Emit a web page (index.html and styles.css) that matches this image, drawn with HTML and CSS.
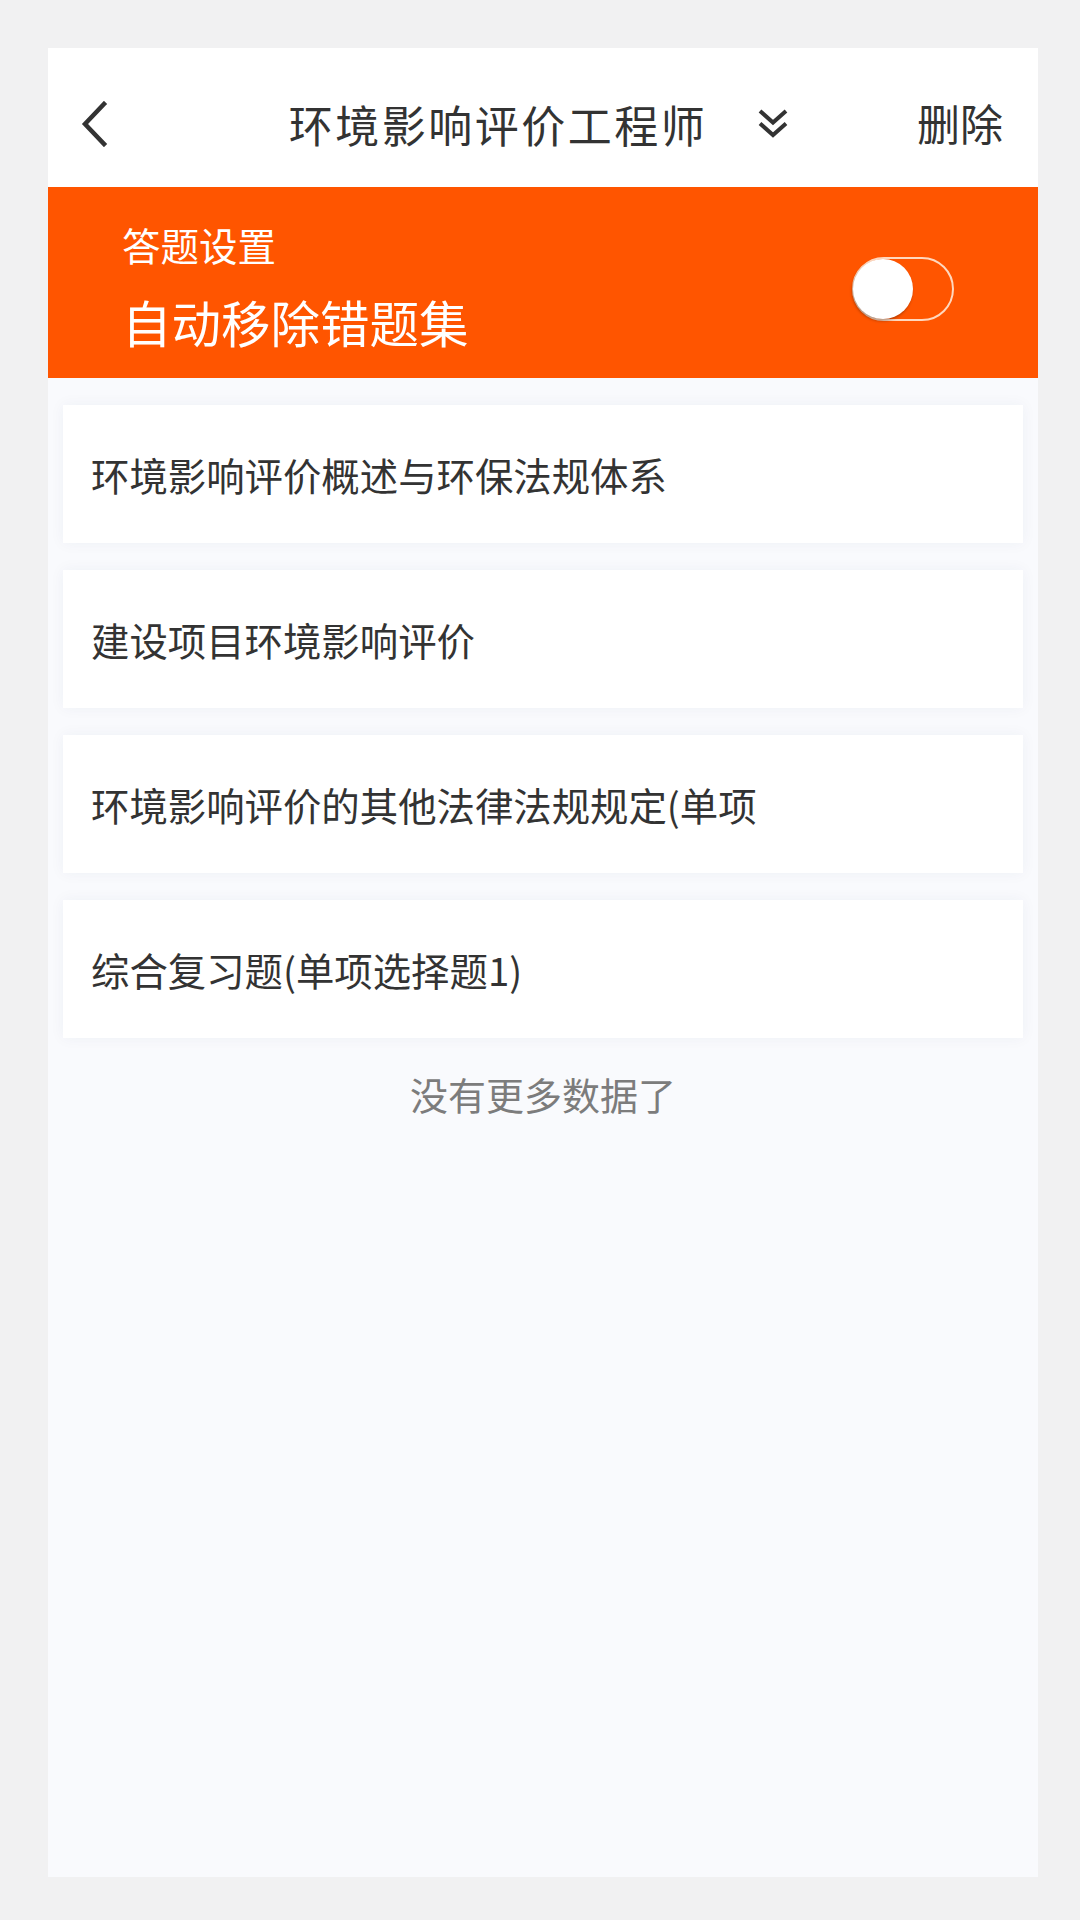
FILE: index.html
```html
<!DOCTYPE html>
<html lang="zh-CN">
<head>
<meta charset="utf-8">
<title>环境影响评价工程师</title>
<link rel="stylesheet" href="styles.css">
</head>
<body>
<div class="page">
  <header class="topbar">
    <div class="bar-left">
      <svg class="back" viewBox="0 0 28 46" width="28" height="46" aria-hidden="true">
        <path d="M24 3 L5 23 L24 43" fill="none" stroke="#333" stroke-width="4.5" stroke-linecap="square" stroke-linejoin="miter"/>
      </svg>
    </div>
    <div class="bar-center">
      <span class="title">环境影响评价工程师</span>
      <svg class="dbl" viewBox="0 0 32 32" width="32" height="32" aria-hidden="true">
        <path d="M3 3 L16 14.5 L29 3" fill="none" stroke="#333" stroke-width="4"/>
        <path d="M3 15.5 L16 27 L29 15.5" fill="none" stroke="#333" stroke-width="4"/>
      </svg>
    </div>
    <div class="bar-right"><span class="del">删除</span></div>
  </header>

  <section class="banner">
    <div class="banner-text">
      <div class="sub">答题设置</div>
      <div class="main">自动移除错题集</div>
    </div>
    <div class="toggle"><span class="knob"></span></div>
  </section>

  <main class="list">
    <div class="item">环境影响评价概述与环保法规体系</div>
    <div class="item">建设项目环境影响评价</div>
    <div class="item">环境影响评价的其他法律法规规定(单项</div>
    <div class="item">综合复习题(单项选择题1)</div>
    <div class="nomore">没有更多数据了</div>
  </main>
</div>
</body>
</html>
```

FILE: styles.css
```css
html, body {
  margin: 0;
  padding: 0;
}
body {
  background: #f1f1f2;
  padding: 48px 0 0 48px;
  font-family: "Noto Sans CJK SC", "Noto Sans", sans-serif;
  width: 1080px;
  height: 1920px;
  box-sizing: border-box;
  overflow: hidden;
}
.page {
  width: 990px;
  height: 1829px;
  background: #f9fafd;
  display: flex;
  flex-direction: column;
}

/* top bar */
.topbar {
  height: 139px;
  box-sizing: border-box;
  padding-top: 12px;
  background: #ffffff;
  display: grid;
  grid-template-columns: 1fr auto 1fr;
  align-items: center;
}
.bar-left {
  padding-left: 32px;
  display: flex;
  align-items: center;
}
.back {
  display: block;
}
.bar-center {
  display: flex;
  align-items: center;
  gap: 50px;
  margin-right: 8px;
}
.title {
  font-size: 44px;
  letter-spacing: 2.5px;
  line-height: 1;
  color: #333333;
}
.dbl {
  display: block;
}
.bar-right {
  justify-self: end;
  padding-right: 35px;
}
.del {
  font-size: 43px;
  line-height: 1;
  color: #333333;
}

/* orange banner */
.banner {
  height: 191px;
  box-sizing: border-box;
  background: #ff5500;
  padding: 32px 84px 26px 74px;
  display: flex;
  align-items: center;
  justify-content: space-between;
}
.banner-text {
  color: #ffffff;
}
.sub {
  font-size: 38.5px;
  line-height: 50px;
}
.main {
  font-size: 49.5px;
  line-height: 60px;
  margin-top: 23px;
}
.toggle {
  width: 102px;
  height: 64px;
  box-sizing: border-box;
  border: 2px solid #ffd8be;
  border-radius: 32px;
  display: flex;
  align-items: center;
  margin-top: 7px;
}
.knob {
  width: 60px;
  height: 60px;
  border-radius: 50%;
  background: #ffffff;
  box-shadow: -1px 2px 3px rgba(0, 0, 0, 0.3);
  margin-left: -1px;
}

/* list */
.list {
  padding: 27px 15px 0;
  display: flex;
  flex-direction: column;
  gap: 27px;
}
.item {
  height: 138px;
  box-sizing: border-box;
  background: #ffffff;
  box-shadow: 0 0 14px rgba(40, 50, 90, 0.05);
  display: flex;
  align-items: center;
  padding-left: 28px;
  font-size: 38.4px;
  color: #333333;
  white-space: nowrap;
  overflow: hidden;
}
.nomore {
  text-align: center;
  font-size: 38px;
  line-height: 58px;
  color: #7c7c7c;
}
```
